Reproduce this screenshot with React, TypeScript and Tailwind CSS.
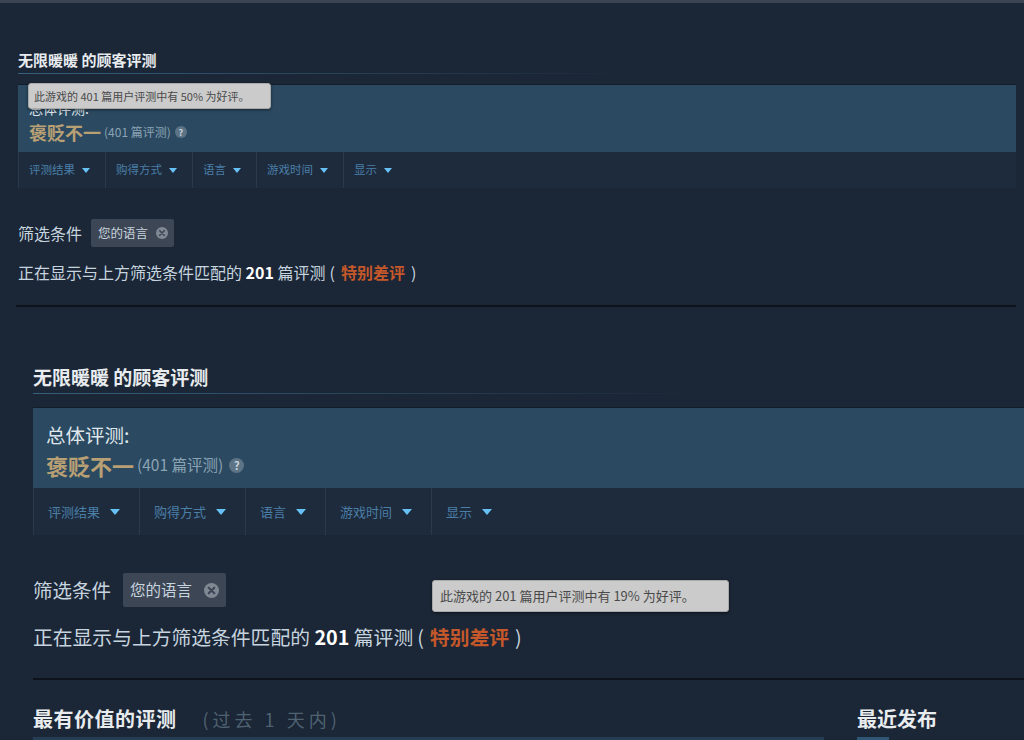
const filters = ['评测结果', '购得方式', '语言', '游戏时间', '显示'];

function Caret({ className }: { className: string }) {
  return (
    <svg viewBox="0 0 10 6" className={className}>
      <polygon points="0,0 10,0 5,6" fill="#67c1f5" />
    </svg>
  );
}

function ClearIcon({ className }: { className: string }) {
  return (
    <svg viewBox="0 0 16 16" className={className}>
      <circle cx="8" cy="8" r="8" fill="#7f8893" />
      <path d="M5 5 L11 11 M11 5 L5 11" stroke="#3d4654" strokeWidth="2.2" strokeLinecap="round" />
    </svg>
  );
}

function HelpDot({ big }: { big?: boolean }) {
  return (
    <span
      className={
        big
          ? 'ml-[6px] flex h-[15px] w-[15px] items-center justify-center rounded-full bg-[#5d7386] text-[11px] font-bold leading-none text-[#c8d5df]'
          : 'ml-[4px] flex h-[12px] w-[12px] items-center justify-center rounded-full bg-[#5d7386] text-[9px] font-bold leading-none text-[#c8d5df]'
      }
    >
      ?
    </span>
  );
}

function FilterBar({ big }: { big?: boolean }) {
  return (
    <div
      className={
        big
          ? 'flex h-[47px] border-l border-[#2a3a4c] bg-[#1e2b3c]'
          : 'flex h-[36px] border-l border-[#2a3a4c] bg-[#1e2b3c]'
      }
    >
      {filters.map((f, i) => (
        <div
          key={f}
          className={
            (big
              ? 'flex items-center gap-[10px] pl-[14px] pr-[19px] text-[13px] text-[#4a7fa8]'
              : 'flex items-center gap-[7px] pl-[10px] pr-[15px] text-[11.5px] text-[#4a7fa8]') +
            (i < filters.length - 1 ? ' border-r border-[#2a3a4c]' : '')
          }
        >
          <span>{f}</span>
          <Caret className={big ? 'h-[6px] w-[10px]' : 'h-[5px] w-[8px]'} />
        </div>
      ))}
    </div>
  );
}

export default function App() {
  return (
    <div className="h-[740px] w-[1024px] overflow-hidden bg-[#1b2636] font-['Noto_Sans_CJK_SC','Noto_Sans',sans-serif] text-[#c6d4df]">
      <div className="h-[3px] bg-[#3a4452]" />

      {/* upper capture */}
      <div className="w-[1016px] pl-[18px]">
        <div className="pt-[47px] text-[15px] font-bold leading-[20px] text-[#e8ecef]">无限暖暖 的顾客评测</div>
        <div className="mt-[3px] h-px w-[620px] bg-linear-to-r from-[#34607e] to-transparent" />

        <div className="relative mt-[10px] h-[68px] border-t border-[#131c27] bg-[#2b4960] pl-[11px] pt-[13px]">
          <div className="text-[14px] leading-[20px] text-[#dfe6ec]">总体评测:</div>
          <div className="mt-[2px] flex h-[24px] items-center">
            <span className="text-[18px] font-bold text-[#b9a074]">褒贬不一</span>
            <span className="ml-[3px] text-[12px] text-[#8aa3b5]">(401 篇评测)</span>
            <HelpDot />
          </div>
          <div className="absolute left-[10px] top-[-2px] flex h-[26px] w-[243px] items-center rounded-[3px] border border-[#a9a9a9] bg-[#cbcbcb] pl-[5px] text-[11px] text-[#4a4a4a] shadow-[0_1px_3px_rgba(0,0,0,0.5)]">
            此游戏的 401 篇用户评测中有 50% 为好评。
          </div>
        </div>

        <FilterBar />

        <div className="mt-[31px] flex h-[28px] items-center">
          <span className="text-[16px]">筛选条件</span>
          <div className="ml-[9px] flex h-[28px] items-center gap-[8px] rounded-[2px] bg-[#3d4654] pl-[7px] pr-[6px] text-[12.5px]">
            <span>您的语言</span>
            <ClearIcon className="h-[12px] w-[12px]" />
          </div>
        </div>

        <div className="mt-[13px] text-[16px] leading-[24px]">
          正在显示与上方筛选条件匹配的 <b className="text-white">201</b> 篇评测
          <span className="ml-[4px]">(</span>
          <b className="mx-[6px] text-[#c4582a]">特别差评</b>
          <span>)</span>
        </div>

        <div className="ml-[-2px] mt-[21px] h-[2px] bg-[#0d131b]" />
      </div>

      {/* lower capture */}
      <div className="pl-[33px]">
        <div className="pt-[57px] text-[19px] font-bold leading-[26px] text-[#e8ecef]">无限暖暖 的顾客评测</div>
        <div className="mt-[3px] h-px w-[680px] bg-linear-to-r from-[#34607e] to-transparent" />

        <div className="mt-[13px] h-[81px] border-t border-[#131c27] bg-[#2b4960] pl-[13px] pt-[14px]">
          <div className="text-[19.5px] leading-[26px] text-[#dfe6ec]">总体评测:</div>
          <div className="mt-[3px] flex h-[28px] items-center">
            <span className="text-[22px] font-bold text-[#b9a074]">褒贬不一</span>
            <span className="ml-[3px] text-[15.5px] text-[#8aa3b5]">(401 篇评测)</span>
            <HelpDot big />
          </div>
        </div>

        <FilterBar big />

        <div className="relative mt-[38px] flex h-[34px] items-center">
          <span className="text-[19.5px]">筛选条件</span>
          <div className="ml-[12px] flex h-[34px] items-center gap-[12px] rounded-[2px] bg-[#3d4654] pl-[7px] pr-[7px] text-[15.5px]">
            <span>您的语言</span>
            <ClearIcon className="h-[15px] w-[15px]" />
          </div>
          <div className="absolute left-[399px] top-[7px] flex h-[32px] w-[297px] items-center rounded-[3px] border border-[#a9a9a9] bg-[#cbcbcb] pl-[7px] text-[13px] text-[#4a4a4a] shadow-[0_1px_3px_rgba(0,0,0,0.5)]">
            此游戏的 201 篇用户评测中有 19% 为好评。
          </div>
        </div>

        <div className="mt-[16px] text-[19.8px] leading-[28px]">
          正在显示与上方筛选条件匹配的 <b className="text-white">201</b> 篇评测
          <span className="ml-[4px]">(</span>
          <b className="mx-[6px] text-[#c4582a]">特别差评</b>
          <span>)</span>
        </div>

        <div className="mt-[27px] h-[2px] bg-[#0d131b]" />

        <div className="mt-[25px] flex h-[28px] items-center">
          <div className="flex flex-1 items-center">
            <span className="text-[20px] font-bold tracking-[0.5px] text-[#e8ecef]">最有价值的评测</span>
            <span className="ml-[26px] text-[18px] tracking-[4px] text-[#4f6272]">(过去 1 天内)</span>
          </div>
          <div className="w-[167px] text-[20px] font-bold text-[#e8ecef]">最近发布</div>
        </div>

        <div className="mt-[4px] flex h-[3px]">
          <div className="mr-[33px] flex-1 bg-[#243d52]" />
          <div className="mr-[135px] w-[32px] bg-[#2f5673]" />
        </div>
      </div>
    </div>
  );
}
